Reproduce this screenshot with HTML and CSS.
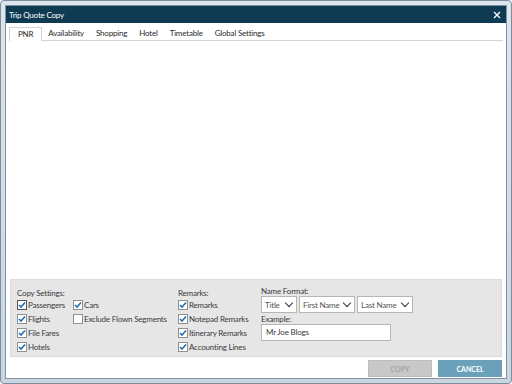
FILE: index.html
```html
<!DOCTYPE html>
<html lang="en">
<head>
    <meta charset="UTF-8">
    <title>Trip Quote Copy</title>
    <link rel="stylesheet" href="styles.css">
</head>
<body>
    <div class="frame">
        <div class="dialog">
            <div class="titlebar">
                <span class="title">Trip Quote Copy</span>
                <svg class="close" width="8" height="8" viewBox="0 0 8 8"><path d="M1 1L7 7M7 1L1 7" stroke="#fff" stroke-width="1.3"/></svg>
            </div>
            <div class="content">
                <div class="tabs">
                    <span class="tab active">PNR</span>
                    <span class="tab">Availability</span>
                    <span class="tab">Shopping</span>
                    <span class="tab">Hotel</span>
                    <span class="tab">Timetable</span>
                    <span class="tab">Global Settings</span>
                </div>
                <div class="page"></div>

                <div class="settings">
                    <div class="group copy-group">
                        <div class="label">Copy Settings:</div>
                        <div class="copy-grid">
                            <label class="check focus"><span class="cb on"></span>Passengers</label>
                            <label class="check"><span class="cb on"></span>Cars</label>
                            <label class="check"><span class="cb on"></span>Flights</label>
                            <label class="check"><span class="cb"></span>Exclude Flown Segments</label>
                            <label class="check"><span class="cb on"></span>File Fares</label>
                            <span></span>
                            <label class="check"><span class="cb on"></span>Hotels</label>
                        </div>
                    </div>
                    <div class="group remarks-group">
                        <div class="label">Remarks:</div>
                        <label class="check"><span class="cb on"></span>Remarks</label>
                        <label class="check"><span class="cb on"></span>Notepad Remarks</label>
                        <label class="check"><span class="cb on"></span>Itinerary Remarks</label>
                        <label class="check"><span class="cb on"></span>Accounting Lines</label>
                    </div>
                    <div class="group name-group">
                        <div class="label">Name Format:</div>
                        <div class="selects">
                            <div class="select w-title">Title<span class="chev"></span></div>
                            <div class="select w-first">First Name<span class="chev"></span></div>
                            <div class="select w-last">Last Name<span class="chev"></span></div>
                        </div>
                        <div class="label">Example:</div>
                        <div class="textbox">Mr Joe Blogs</div>
                    </div>
                </div>

                <div class="buttons">
                    <button class="btn disabled">COPY</button>
                    <button class="btn primary">CANCEL</button>
                </div>
            </div>
        </div>
    </div>
</body>
</html>
```

FILE: styles.css
```css
html, body {
    margin: 0;
    padding: 0;
}
body {
    width: 512px;
    height: 384px;
    font-family: "Lato", "Open Sans", sans-serif;
    font-size: 8px;
    letter-spacing: -0.2px;
    color: #3a3a3a;
    background: #ffffff;
}
.frame {
    box-sizing: border-box;
    width: 512px;
    height: 384px;
    padding: 4px 4px 6px 4px;
    background: linear-gradient(#dde6ee, #c9d5e0);
    border: 1px solid #7d8c99;
    border-radius: 4px;
}
.dialog {
    height: 100%;
    display: flex;
    flex-direction: column;
    border: 1px solid #8192a2;
}
.titlebar {
    height: 17px;
    background: #0e3b52;
    color: #fff;
    display: flex;
    align-items: center;
    justify-content: space-between;
    padding: 0 5px 0 3px;
}
.content {
    flex: 1;
    background: #fff;
    display: flex;
    flex-direction: column;
    padding: 0 3px 1px 3px;
}
.tabs {
    display: flex;
    align-items: flex-end;
    margin-top: 2px;
    height: 15px;
    border-bottom: 1px solid #d4d4d4;
}
.tab {
    padding: 0 6px 2px 6px;
    color: #2a2a2a;
}
.tab.active {
    border: 1px solid #d4d4d4;
    border-bottom: none;
    background: #fff;
    padding: 1px 8px 2px 8px;
    margin-bottom: -1px;
}
.page {
    flex: 1;
}
.settings {
    height: 78px;
    box-sizing: border-box;
    background: #e6e6e6;
    border: 1px solid #dcdcdc;
    display: flex;
    padding: 8px 0 0 6px;
    margin: 0 1px;
}
.label {
    height: 10px;
    line-height: 10px;
}
.check {
    display: flex;
    align-items: center;
    height: 14px;
    white-space: nowrap;
}
.cb {
    box-sizing: border-box;
    width: 10px;
    height: 10px;
    border: 1px solid #8e8f8f;
    background: #fff;
    margin-right: 1px;
    flex-shrink: 0;
}
.cb.on {
    background: #fff url("data:image/svg+xml,%3Csvg xmlns='http://www.w3.org/2000/svg' width='8' height='8' viewBox='0 0 8 8'%3E%3Cpath d='M1 4L3 6L7 1.5' fill='none' stroke='%23236fb5' stroke-width='1.6'/%3E%3C/svg%3E") center/8px 8px no-repeat;
}
.check.focus .cb {
    border-color: #555;
}
.copy-group {
    width: 161px;
}
.copy-grid {
    display: grid;
    grid-template-columns: 56px auto;
}
.remarks-group {
    width: 83px;
}
.name-group .label {
    margin-top: -2px;
}
.selects {
    display: flex;
    gap: 2px;
    margin: 0 0 3px 0;
}
.select {
    box-sizing: border-box;
    height: 17px;
    border: 1px solid #b6b6b6;
    background: #fff;
    display: flex;
    align-items: center;
    justify-content: space-between;
    padding: 0 3px 0 3px;
    color: #555;
}
.w-title { width: 36px; }
.w-first { width: 56px; }
.w-last { width: 56px; }
.chev {
    width: 5px;
    height: 5px;
    border-right: 1.3px solid #333;
    border-bottom: 1.3px solid #333;
    transform: rotate(45deg);
    margin: -3px 1px 0 0;
}
.textbox {
    box-sizing: border-box;
    width: 130px;
    height: 17px;
    border: 1px solid #b6b6b6;
    background: #fff;
    padding: 0 4px;
    line-height: 15px;
}
.buttons {
    display: flex;
    justify-content: flex-end;
    gap: 6px;
    padding: 3px 1px 0 0;
}
.btn {
    width: 64px;
    height: 17px;
    border: 1px solid #bdbdbd;
    font-family: inherit;
    font-size: 7px;
    font-weight: bold;
    letter-spacing: 0;
    padding: 0;
}
.btn.disabled {
    background: #c8c8c8;
    color: #a5a5a5;
}
.btn.primary {
    background: #6ba0ba;
    border-color: #6ba0ba;
    color: #fff;
}
```
